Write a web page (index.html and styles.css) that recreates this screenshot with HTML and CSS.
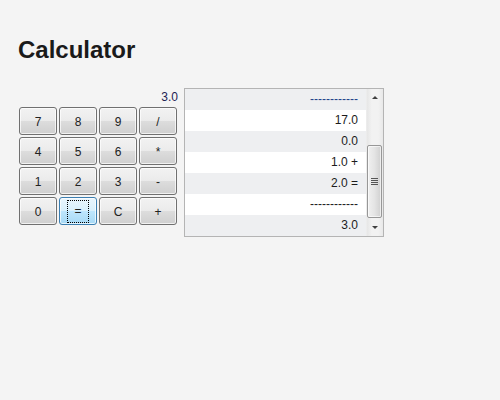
FILE: index.html
```html
<!DOCTYPE html>
<html>
<head>
<meta charset="utf-8">
<link rel="stylesheet" href="styles.css">
</head>
<body>
<h1 class="title">Calculator</h1>
<div class="calc">
  <div class="pad">
    <div class="display">3.0</div>
    <div class="keys">
      <button class="key">7</button>
      <button class="key">8</button>
      <button class="key">9</button>
      <button class="key">/</button>
      <button class="key">4</button>
      <button class="key">5</button>
      <button class="key">6</button>
      <button class="key">*</button>
      <button class="key">1</button>
      <button class="key">2</button>
      <button class="key">3</button>
      <button class="key">-</button>
      <button class="key">0</button>
      <button class="key key-focus"><span class="focus-ring">=</span></button>
      <button class="key">C</button>
      <button class="key">+</button>
    </div>
  </div>
  <div class="history">
    <div class="rows">
      <div class="row row-alt row-first">------------</div>
      <div class="row">17.0</div>
      <div class="row row-alt">0.0</div>
      <div class="row">1.0 +</div>
      <div class="row row-alt">2.0 =</div>
      <div class="row">------------</div>
      <div class="row row-alt">3.0</div>
    </div>
    <div class="scrollbar">
      <div class="arrow arrow-up"></div>
      <div class="track">
        <div class="thumb"><span class="grip"></span></div>
      </div>
      <div class="arrow arrow-down"></div>
    </div>
  </div>
</div>
</body>
</html>
```

FILE: styles.css
```css
html, body {
  margin: 0;
  padding: 0;
  background: #f4f4f4;
  font-family: "Liberation Sans", Arial, sans-serif;
}

body {
  padding: 37px 0 0 18px;
}

.title {
  margin: 0;
  font-size: 24px;
  font-weight: bold;
  color: #1a1a1a;
  line-height: 26px;
}

.calc {
  display: flex;
  align-items: flex-start;
  gap: 7px;
  margin-top: 25px;
  margin-left: 1px;
}

.pad {
  display: flex;
  flex-direction: column;
}

.display {
  height: 19px;
  line-height: 19px;
  font-size: 12px;
  text-align: right;
  color: #1d2353;
  margin-right: -1px;
}

.keys {
  display: grid;
  grid-template-columns: repeat(4, 38px);
  grid-auto-rows: 28px;
  gap: 2px;
}

.key {
  margin: 0;
  padding: 1px 0 0 0;
  border: 1px solid #707070;
  border-radius: 3px;
  background: linear-gradient(to bottom, #f2f2f2 0%, #ebebeb 48%, #dddddd 50%, #cfcfcf 100%);
  box-shadow: inset 0 0 0 1px rgba(255,255,255,0.7);
  font-family: "Liberation Sans", Arial, sans-serif;
  font-size: 12px;
  color: #222;
  display: flex;
  align-items: center;
  justify-content: center;
}

.key-focus {
  padding: 0;
  border-color: #3c7fb1;
  background: linear-gradient(to bottom, #eaf6fd 0%, #d9f0fc 48%, #bee6fd 50%, #a7d9f5 100%);
}

.focus-ring {
  display: flex;
  align-items: center;
  justify-content: center;
  width: 22px;
  height: 23px;
  margin-top: 0;
  border: 1px dotted #000;
  box-sizing: border-box;
}

.history {
  display: flex;
  width: 200px;
  height: 149px;
  border: 1px solid #b4b4b4;
  box-sizing: border-box;
  background: #fff;
}

.rows {
  flex: 1;
  display: flex;
  flex-direction: column;
}

.row {
  height: 21px;
  line-height: 21px;
  font-size: 12px;
  text-align: right;
  padding-right: 8px;
  color: #1c1c1c;
  background: #fff;
}

.row-alt {
  background: #eeeff1;
}

.row-first {
  color: #1f3f8a;
}

.scrollbar {
  width: 17px;
  display: flex;
  flex-direction: column;
  background: linear-gradient(to right, #e6e6e6, #f2f2f2 30%, #f2f2f2 70%, #e8e8e8);
  border-left: 1px solid #ececec;
  box-sizing: border-box;
}

.arrow {
  height: 17px;
  display: flex;
  align-items: center;
  justify-content: center;
}

.arrow-up::before {
  content: "";
  border-left: 3px solid transparent;
  border-right: 3px solid transparent;
  border-bottom: 3px solid #404040;
}

.arrow-down::before {
  content: "";
  border-left: 3px solid transparent;
  border-right: 3px solid transparent;
  border-top: 3px solid #404040;
}

.track {
  flex: 1;
  display: flex;
  flex-direction: column;
  justify-content: flex-end;
  padding: 0 0 1px 0;
}

.thumb {
  height: 71px;
  margin: 0 1px 0 0;
  border: 1px solid #979797;
  border-radius: 2px;
  background: linear-gradient(to right, #f0f0f0, #e4e4e4 50%, #d0d0d0);
  box-shadow: inset 0 0 0 1px rgba(255,255,255,0.6);
  display: flex;
  align-items: center;
  justify-content: center;
}

.grip {
  width: 7px;
  height: 7px;
  background: repeating-linear-gradient(to bottom, #555 0, #555 1px, transparent 1px, transparent 2px);
}
```
